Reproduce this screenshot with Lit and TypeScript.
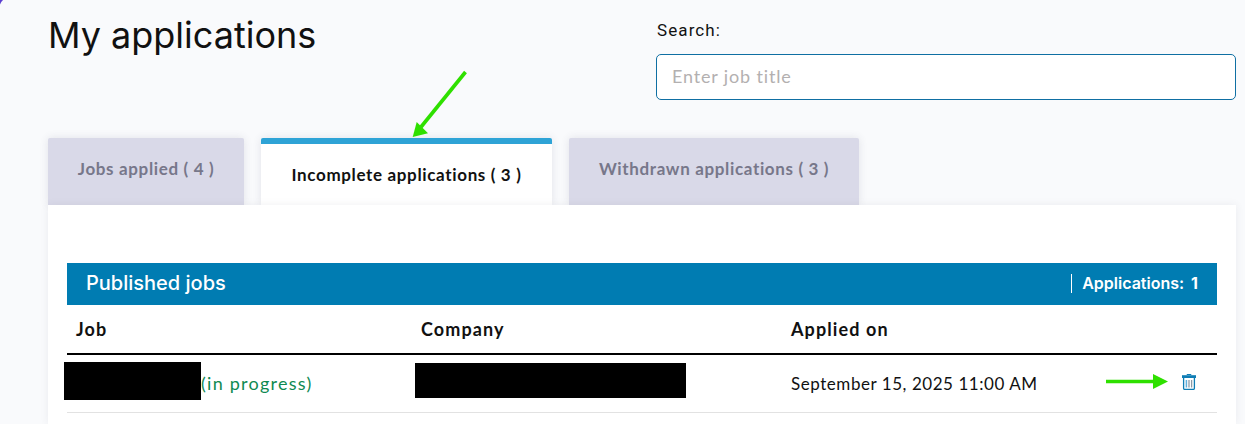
import { LitElement, html, css } from "lit";
import { customElement } from "lit/decorators.js";

@customElement("app-root")
export class AppRoot extends LitElement {
  static styles = css`
    :host {
      display: block;
      position: relative;
      width: 1245px;
      height: 424px;
      overflow: hidden;
      background: #f9fafc;
      color: #111;
      font-family: "Lato", "Liberation Sans", sans-serif;
    }

    .corner {
      position: absolute;
      left: 0;
      top: 0;
    }

    .page {
      width: 1188px;
      margin-left: 48px;
    }

    .top {
      display: flex;
      justify-content: space-between;
      height: 138px;
    }

    h1 {
      margin: 14px 0 0;
      font-family: "Inter", sans-serif;
      font-size: 36px;
      line-height: 42px;
      font-weight: 400;
      color: #111;
    }

    .search {
      width: 580px;
      padding-top: 20px;
    }

    .search label {
      display: block;
      height: 34px;
      padding-left: 1px;
      font-family: "Roboto", sans-serif;
      font-size: 17px;
      line-height: 20px;
      letter-spacing: 1.1px;
      color: #111;
    }

    .search .input {
      box-sizing: border-box;
      height: 46px;
      padding: 0 0 2px 15px;
      border: 1px solid #0f6fa3;
      border-radius: 5px;
      background: #fff;
      font-size: 18px;
      line-height: 42px;
      color: #b3b0b0;
      letter-spacing: 0.85px;
    }

    .tabs {
      display: flex;
      gap: 17px;
      height: 67px;
    }

    .tab {
      box-sizing: border-box;
      display: flex;
      justify-content: center;
      padding-top: 21px;
      border-radius: 2px 2px 0 0;
      background: #d9d9e8;
      box-shadow: 0 0 8px rgba(60, 60, 90, 0.12);
      font-size: 17px;
      line-height: 20px;
      font-weight: 700;
      letter-spacing: 0.65px;
      color: #77778a;
    }

    .tab.applied {
      width: 196px;
    }

    .tab.incomplete {
      width: 291px;
      padding-top: 21px;
      border-top: 6px solid #2ea3d6;
      background: #fff;
      color: #111;
    }

    .tab.withdrawn {
      width: 290px;
    }

    .card {
      position: relative;
      height: 219px;
      padding: 58px 19px 0;
      box-sizing: border-box;
      background: #fff;
      box-shadow: 0 0 8px rgba(60, 60, 90, 0.08);
    }

    .banner {
      display: flex;
      align-items: center;
      justify-content: space-between;
      box-sizing: border-box;
      height: 42px;
      padding: 0 19px 2px;
      background: #007cb2;
      color: #fff;
      font-family: "Inter", sans-serif;
    }

    .banner .name {
      font-size: 20px;
      font-weight: 500;
    }

    .banner .count {
      display: flex;
      align-items: center;
      height: 19px;
      padding-left: 10px;
      border-left: 1px solid #fff;
      font-size: 16px;
      font-weight: 600;
    }

    .banner .count b {
      margin-left: 7px;
      font-weight: 700;
    }

    .row {
      display: grid;
      grid-template-columns: 345px 370px 1fr;
      padding-left: 9px;
    }

    .row.head {
      box-sizing: border-box;
      height: 50px;
      padding-bottom: 1px;
      align-items: center;
      border-bottom: 2px solid #000;
      font-size: 18px;
      font-weight: 700;
      letter-spacing: 1.1px;
      color: #111;
    }

    .row.item {
      box-sizing: border-box;
      height: 58px;
      padding-bottom: 2px;
      align-items: center;
      border-bottom: 1px solid #e2e2e2;
      font-size: 17px;
      letter-spacing: 0.55px;
    }

    .cell {
      display: flex;
      align-items: center;
    }

    .cell.date {
      padding-top: 2px;
    }

    .redact {
      background: #000;
    }

    .redact.job {
      width: 137px;
      height: 38px;
      margin: 0 0 4px -12px;
    }

    .redact.company {
      width: 271px;
      height: 35px;
      margin: 0 0 4px -6px;
    }

    .progress {
      color: #0f8a52;
      font-size: 18px;
      letter-spacing: 1.25px;
    }

    .trash {
      position: absolute;
      left: 1134px;
      top: 169px;
    }

    .arrows {
      position: absolute;
      left: 0;
      top: 0;
      pointer-events: none;
    }
  `;

  render() {
    return html`
      <svg class="corner" width="4" height="6" viewBox="0 0 4 6">
        <path d="M0 0H3Q1 1.5 0 4.5Z" fill="#5b3fd0" />
      </svg>
      <div class="page">
        <div class="top">
          <h1>My applications</h1>
          <div class="search">
            <label>Search:</label>
            <div class="input">Enter job title</div>
          </div>
        </div>
        <div class="tabs">
          <div class="tab applied">Jobs applied ( 4 )</div>
          <div class="tab incomplete">Incomplete applications ( 3 )</div>
          <div class="tab withdrawn">Withdrawn applications ( 3 )</div>
        </div>
        <div class="card">
          <div class="banner">
            <span class="name">Published jobs</span>
            <span class="count">Applications: <b>1</b></span>
          </div>
          <div class="row head">
            <span>Job</span>
            <span>Company</span>
            <span>Applied on</span>
          </div>
          <div class="row item">
            <div class="cell">
              <div class="redact job"></div>
              <span class="progress">(in progress)</span>
            </div>
            <div class="cell"><div class="redact company"></div></div>
            <div class="cell date">September 15, 2025 11:00 AM</div>
          </div>
          <svg class="trash" width="14" height="16" viewBox="0 0 14 16">
            <path d="M5 1V0.5H9V1" fill="none" stroke="#0e7db5" />
            <path d="M0 1.2H14V4H0Z" fill="#0e7db5" />
            <path d="M1.6 4V14.2Q1.6 15.4 2.8 15.4H11.2Q12.4 15.4 12.4 14.2V4" fill="#fff" stroke="#0e7db5" stroke-width="1.3" />
            <path d="M4.4 6V13.5" stroke="#5fb0dc" stroke-width="1.5" />
            <path d="M7 6V13.5" stroke="#8c9aa6" stroke-width="1.3" />
            <path d="M9.6 6V13.5" stroke="#8c9aa6" stroke-width="1.3" />
          </svg>
        </div>
      </div>
      <svg class="arrows" width="1245" height="424" viewBox="0 0 1245 424">
        <path d="M465.5 72L421 127" stroke="#2fe000" stroke-width="3.6" />
        <path d="M412.7 137L416.7 122L428 133.3Z" fill="#2fe000" />
        <path d="M1106 381.5H1155" stroke="#2fe000" stroke-width="3.4" />
        <path d="M1168 381.5L1153 374V389Z" fill="#2fe000" />
      </svg>
    `;
  }
}
